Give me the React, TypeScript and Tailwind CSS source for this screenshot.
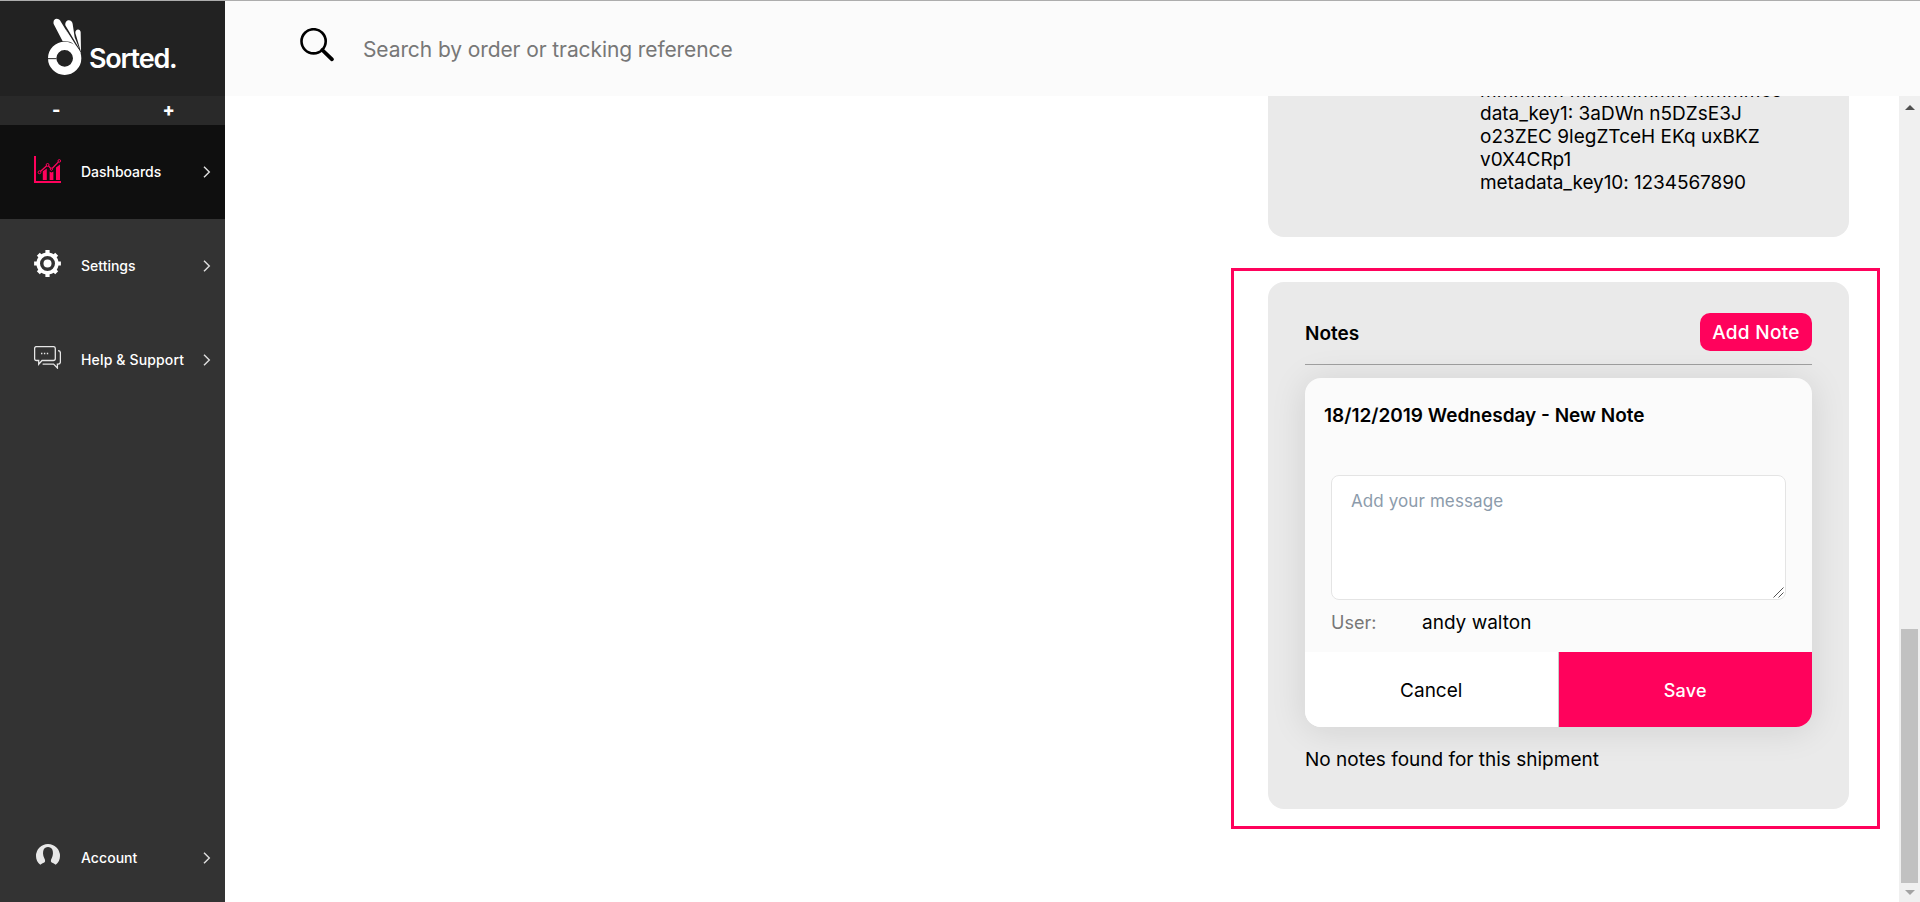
import type { ReactNode } from "react";

function Logo() {
  return (
    <svg width="34" height="58" viewBox="144 54 102 174" fill="#fff">
      <path d="M161 72C157 53 177 52 183 66L223 131Q205 122 188 124Z" />
      <path d="M196 76C194 56 217 57 218 72L224 112L238 146Z" />
      <path d="M226 99C225 85 242 85 242 97L243 156Z" />
      <path d="M216 128L196 86L242 158L240 162Z" />
      <circle cx="194" cy="175" r="37.5" fill="none" stroke="#fff" strokeWidth="25" />
      <path d="M144 176H169" stroke="#222" strokeWidth="3" />
    </svg>
  );
}

function ChartIcon() {
  return (
    <svg width="27" height="27" viewBox="0 0 27 27" fill="#ff025c">
      <path d="M0 0H2V25H27V27H0Z" />
      <path d="M8.8 15.2L12.8 12.5V24H8.8ZM15.6 15.6L17.5 16.6L19.4 15.4V24H15.6ZM22 11.5L26 8.5V24H22Z" />
      <path d="M5.5 16.3L13.6 8.9L17.4 13.2L25.4 4.9" fill="none" stroke="#ff025c" strokeWidth="1.3" />
      <g stroke="#ff025c" fill="#0f0f0f">
        <circle cx="5.5" cy="16.3" r="1.4" />
        <circle cx="13.6" cy="8.9" r="1.4" />
        <circle cx="17.4" cy="13.2" r="1.1" />
        <circle cx="25.3" cy="4.9" r="1.3" />
      </g>
    </svg>
  );
}

function GearIcon() {
  return (
    <svg width="27" height="27" viewBox="-13.5 -13.5 27 27" stroke="#fff" fill="none">
      <circle r="9.3" strokeWidth="3.6" />
      <circle r="4" fill="#fff" stroke="none" />
      <g strokeWidth="4.2">
        <path d="M0 -9.5V-13.4M0 9.5V13.4M-9.5 0H-13.4M9.5 0H13.4" />
        <path d="M6.4 -6.4L9.2 -9.2M6.4 6.4L9.2 9.2M-6.4 6.4L-9.2 9.2M-6.4 -6.4L-9.2 -9.2" />
      </g>
    </svg>
  );
}

function ChatIcon() {
  return (
    <svg width="27" height="23" viewBox="0 0 27 23" stroke="#e6e6e6" fill="none">
      <path d="M2.5 0.6H19.3Q21.3 0.6 21.3 2.6V12.5Q21.3 14.5 19.3 14.5H8L4.7 18.3V14.5H2.5Q0.6 14.5 0.6 12.5V2.6Q0.6 0.6 2.5 0.6Z" strokeWidth="1.3" />
      <path d="M24 4.6Q26.4 4.6 26.4 7V15.8Q26.4 18.1 24.2 18.1H23.4V22L19.6 18.1H8.6" strokeWidth="1.3" />
      <path d="M7 7.5H8.4M9.9 7.5H11.3M12.8 7.5H14.2" strokeWidth="1.4" />
    </svg>
  );
}

function AccountIcon() {
  return (
    <svg className="mb-[3px]" width="24" height="21" viewBox="0 0 24 21" fill="#e8e8e8">
      <path d="M4.3 20.8C1.5 18.6 0 15.6 0 12A12 12 0 0 1 24 12C24 15.6 22.5 18.6 19.7 20.8C18.5 19.2 16.2 19 15.4 18.2C14.5 17.2 14.9 15.6 15.7 14.2C17.2 11.6 17.3 8 16.4 5.8C15.6 4 13.9 3 12 3C10.1 3 8.4 4 7.6 5.8C6.7 8 6.8 11.6 8.3 14.2C9.1 15.6 9.5 17.2 8.6 18.2C7.8 19 5.5 19.2 4.3 20.8Z" />
    </svg>
  );
}

function Chevron() {
  return (
    <svg className="shrink-0" width="8" height="12" viewBox="0 0 8 12" fill="none" stroke="#e0e0e0" strokeWidth="1.4">
      <path d="M1 0.7L6.3 6L1 11.3" />
    </svg>
  );
}

function NavItem({ icon, label, tracking, className }: { icon: ReactNode; label: string; tracking: string; className: string }) {
  return (
    <a className={`flex shrink-0 items-center pl-[34px] text-[14px] font-medium text-white ${className}`}>
      <span className="mb-[5px] flex w-[27px] justify-center">{icon}</span>
      <span className={`mb-[2px] ml-[20px] w-[122px] whitespace-nowrap ${tracking}`}>{label}</span>
      <Chevron />
    </a>
  );
}

function Sidebar() {
  return (
    <aside className="flex w-[225px] shrink-0 flex-col bg-[#333]">
      <div className="flex h-[95px] shrink-0 items-start bg-[#222] pt-[17px] pl-12">
        <Logo />
        <span className="mt-[24px] ml-[7px] text-[27px] leading-[34px] font-semibold tracking-[-1.2px] text-white">Sorted.</span>
      </div>
      <div className="grid h-[29px] shrink-0 grid-cols-2 bg-[#292929] text-center text-[18px] leading-[28px] font-extrabold text-white">
        <span>-</span>
        <span>+</span>
      </div>
      <NavItem className="h-[94px] bg-[#0f0f0f]" icon={<ChartIcon />} label="Dashboards" tracking="tracking-[-0.03px]" />
      <NavItem className="h-[94px]" icon={<GearIcon />} label="Settings" tracking="tracking-normal" />
      <NavItem className="h-[94px]" icon={<ChatIcon />} label="Help & Support" tracking="tracking-[0.15px]" />
      <NavItem className="mt-auto h-[88px]" icon={<AccountIcon />} label="Account" tracking="tracking-[0.05px]" />
    </aside>
  );
}

function Header() {
  return (
    <header className="flex h-[95px] shrink-0 items-start bg-[#fbfbfb] pl-[75px]">
      <svg className="mt-[27px]" width="35" height="35" viewBox="0 0 35 35" fill="none" stroke="#000">
        <circle cx="13.6" cy="13.3" r="12.1" strokeWidth="2.6" />
        <path d="M22.3 22L32 31.3" strokeWidth="3.8" strokeLinecap="round" />
      </svg>
      <span className="mt-[34px] ml-[28px] text-[21px] leading-[30px] tracking-[-0.1px] text-[#777]">
        Search by order or tracking reference
      </span>
    </header>
  );
}

function MetadataCard() {
  return (
    <section className="ml-[1043px] flex h-[141px] w-[581px] shrink-0 flex-col justify-end overflow-hidden rounded-b-2xl bg-[#eaeaea] pb-[43px] pl-[212px] whitespace-nowrap">
      <p className="tracking-[0.2px]">mmmmm mmmmmmm mmmmes</p>
      <p>data_key1: 3aDWn n5DZsE3J</p>
      <p>o23ZEC 9legZTceH EKq uxBKZ</p>
      <p>v0X4CRp1</p>
      <p className="tracking-[-0.08px]">metadata_key10: 1234567890</p>
    </section>
  );
}

function NoteForm() {
  return (
    <form className="flex h-[349px] flex-col overflow-hidden rounded-2xl bg-[#fbfbfb] shadow-[0_3px_36px_rgba(0,0,0,0.11)]">
      <h3 className="mt-[26px] ml-[19px] font-semibold">18/12/2019 Wednesday - New Note</h3>
      <div className="relative mt-[48px] ml-[26px] h-[125px] w-[455px] shrink-0">
        <textarea
          className="block h-full w-full resize-none rounded-lg border border-[#e4e4e4] bg-white px-[19px] py-[13px] text-[17px] leading-[24px] tracking-[0.1px] outline-none placeholder:text-[#8c9bab]"
          placeholder="Add your message"
        />
        <svg className="absolute right-[2px] bottom-[2px]" width="11" height="11" viewBox="0 0 11 11" stroke="#555" strokeWidth="1">
          <path d="M0.5 10.5L10.5 0.5M5.5 10.5L10.5 5.5" />
        </svg>
      </div>
      <div className="mt-[11px] ml-[26px] flex">
        <span className="w-[91px] text-[18px] text-[#777]">User:</span>
        <span>andy walton</span>
      </div>
      <div className="mt-auto grid h-[75px] grid-cols-2">
        <button type="button" className="border-r border-[#ccc] bg-white pt-[2px]">Cancel</button>
        <button type="button" className="bg-[#ff025c] pt-[2px] text-[18px] font-medium tracking-[0.2px] text-white">Save</button>
      </div>
    </form>
  );
}

function NotesCard() {
  return (
    <section className="h-[527px] w-[581px] rounded-2xl bg-[#eaeaea] px-[37px] pt-[31px]">
      <div className="flex h-[52px] items-start justify-between border-b border-[#a0a0a0]">
        <h2 className="mt-[9px] font-semibold">Notes</h2>
        <button type="button" className="h-[38px] w-[112px] rounded-[10px] bg-[#ff025c] font-medium tracking-[0.3px] text-white">
          Add Note
        </button>
      </div>
      <div className="mt-[13px]">
        <NoteForm />
      </div>
      <p className="mt-[21px]">No notes found for this shipment</p>
    </section>
  );
}

function Scrollbar() {
  return (
    <div className="flex w-[21px] shrink-0 flex-col items-center bg-[#f0f0f0]">
      <svg className="mt-[9px] shrink-0" width="10" height="5" viewBox="0 0 10 5" fill="#505050">
        <path d="M5 0L10 5H0Z" />
      </svg>
      <div className="mt-auto h-[254px] w-[17px] bg-[#c1c1c1]" />
      <svg className="mt-[7px] mb-[7px] shrink-0" width="10" height="5" viewBox="0 0 10 5" fill="#a3a3a3">
        <path d="M5 5L10 0H0Z" />
      </svg>
    </div>
  );
}

export default function App() {
  return (
    <div className="flex h-[902px] w-[1920px] overflow-hidden border-t border-[#adadad] bg-white font-['Inter','Liberation_Sans',sans-serif] text-[19px] leading-[23px] text-black">
      <Sidebar />
      <div className="flex min-w-0 grow flex-col">
        <Header />
        <div className="flex min-h-0 grow">
          <main className="flex min-w-0 grow flex-col overflow-hidden">
            <MetadataCard />
            <div className="mt-[31px] ml-[1006px] h-[561px] w-[649px] shrink-0 border-3 border-[#ff025c] pt-[11px] pl-[34px]">
              <NotesCard />
            </div>
          </main>
          <Scrollbar />
        </div>
      </div>
    </div>
  );
}
